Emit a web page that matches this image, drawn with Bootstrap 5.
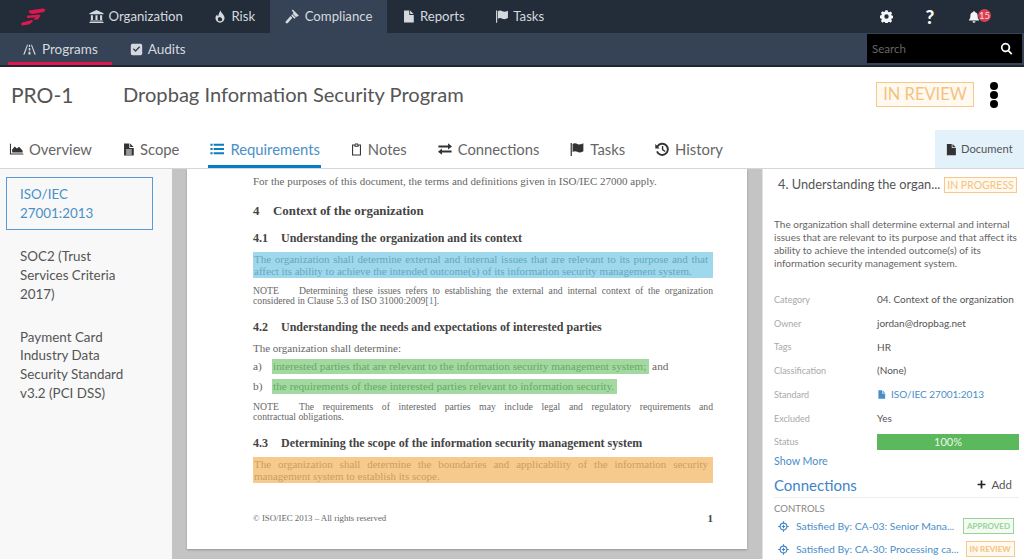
<!DOCTYPE html>
<html lang="en">
<head>
<meta charset="utf-8">
<title>Dropbag Information Security Program</title>
<link href="https://cdn.jsdelivr.net/npm/bootstrap@5.3.0/dist/css/bootstrap.min.css" rel="stylesheet">
<style>
html,body{height:559px;overflow:hidden;}
body{font-family:"Lato","Liberation Sans",sans-serif;background:#fff;color:#555;}
.ic{fill:currentColor;flex:none;display:block;}
.bar-top{height:33px;background:#232c39;}
.bar-sub{height:34px;background:#364356;border-bottom:2px solid #1f2732;}
.logo-box{width:74px;padding-left:21px;}
.top-item{height:33px;padding:0 15px;color:#d5d9de;font-size:13.2px;gap:4.5px;}
.top-item.on{background:#364356;}
.top-tool{width:44px;color:#f4f5f6;font-size:19px;font-weight:900;line-height:20px;}
.bell-wrap{position:relative;}
.bell-num{position:absolute;left:10px;top:-1.5px;width:13px;height:13px;border-radius:50%;background:#d9404f;color:#f6dfe0;font-size:9.5px;line-height:13px;text-align:center;font-weight:400;}
.sub-item{height:32px;padding:0 14px;margin-left:8px;color:#d5d9de;font-size:13.5px;gap:5px;}
.sub-item.on{border-bottom:3px solid #e0174f;padding-top:3px;}
.sub-gap{margin-left:4px;}
.srch{width:155px;height:29px;margin:1px 2px 0 0;background:#000;color:#666;font-size:11.5px;padding:0 9px 0 5px;}
.head-row{height:63px;padding:0 26px 8px 11px;}
.pro-id{width:112px;font-size:21px;color:#555;}
.pro-title{font-size:20.1px;color:#555;}
.st-big{width:98px;height:25px;border:1px solid #f6c98a;background:#fff9f0;color:#f5c27e;font-size:16.5px;line-height:23px;text-align:center;margin-right:16px;}
.dots{width:8px;gap:1px;}
.dots i{display:block;width:8px;height:8px;border-radius:50%;background:#000;}
.tab-row{height:39px;border-bottom:1px solid #d6d6d6;padding-left:9px;}
.tb{height:38px;font-size:14.8px;color:#666;gap:5px;margin-right:30px;}
.tb .ic{color:#333;}
.tb.on{color:#4a90c8;border-bottom:3px solid #0a7cc1;margin-left:-1px;padding:3px 1px 0;margin-right:29px;}
.tb.on .ic{color:#0a7cc1;}
.doc-btn{width:89px;height:38px;background:#e3f1fb;color:#555;font-size:11.2px;gap:4px;padding-left:10px;}
.doc-btn .ic{color:#333;}
.main-row{height:390px;overflow:hidden;}
.side{width:172px;background:#f8f8f8;padding:8px 19px 0 6px;flex:none;font-size:13.4px;line-height:18.7px;color:#555;}
.side-item{padding:0 14px;margin-bottom:24px;}
.side-item.on{border:1px solid #5b9bd5;color:#4a90c8;padding:7px 13px 7px;margin-bottom:17px;}
.viewer{width:590px;flex:none;background:#c4c4c4;padding:0 15px;}
.pg{height:380px;background:#fff;padding:6px 34px 0 66px;font-family:"Liberation Serif",serif;font-size:11px;line-height:12px;color:#666;box-shadow:0 1px 2px rgba(0,0,0,.25);}
.pg p{margin:0;text-align:justify;}
.pg .s-note{font-size:9.7px;line-height:10.4px;}
.note-k{display:inline-block;width:46px;}
.ln-j{display:block;text-align-last:justify;}
.pg h5,.pg h6{margin:0;font-family:"Liberation Serif",serif;font-weight:700;color:#444;line-height:14px;}
.pg h5{font-size:12.9px;}
.pg h6{font-size:12px;}
.hl{margin:0 -5px 0 -1px;padding:0 5px 0 1px;}
.hl-b{background:#9fd8ec;color:#5fa9bd;}
.hl-o{background:#f6ca8c;color:#cd9d5e;}
.li-row{height:15px;line-height:15px;font-size:11.3px;}
.li-k{width:19px;}
.hl-g{background:#a3d9a0;color:#66a966;padding:0 3px 0 1px;}
.pg-foot{font-size:8.8px;}
.pg-num{font-size:11px;font-weight:700;color:#444;}
.rp{flex:1;min-width:0;padding:0 5px 0 11px;border-left:1px solid #e2e2e2;font-size:10px;color:#666;}
.rp-head{height:32px;padding-left:4px;}
.rp-title{width:166px;font-size:12.8px;color:#555;white-space:nowrap;}
.st-mid{width:73px;height:16px;border:1px solid #f6c98a;background:#fff9f0;color:#f5c27e;font-size:10.5px;line-height:14px;text-align:center;}
.rp-desc{margin:17px 0 0;line-height:13px;font-size:10px;color:#666;}
.rp-list{margin-top:18px;}
.rw{height:23.7px;}
.rw-k{width:103px;font-size:9px;color:#a9a9a9;}
.rw-v{flex:1;font-size:10px;color:#555;gap:5px;white-space:nowrap;}
.lnk{color:#4a8ec9;}
.prg{height:16px;background:#5cb85c;color:#eaf6ea;font-size:11px;line-height:16px;text-align:center;flex:1;}
.more{font-size:10.7px;color:#4a8ec9;margin-top:-1px;}
.conn-row{height:25px;border-bottom:1px solid #eee;margin-top:4px;}
.conn{font-size:15px;color:#3d85c6;}
.addb{font-size:11.5px;color:#555;gap:5px;padding-right:7px;}
.addb .ic{color:#222;}
.ctl{font-size:9.6px;color:#888;margin-top:4px;line-height:13px;}
.ci{height:23px;padding-left:4px;font-size:10.4px;color:#4a8ec9;gap:7px;padding-right:5px;white-space:nowrap;}
.cb{height:16px;font-size:8px;font-weight:700;line-height:14px;text-align:center;border:1px solid;margin-left:auto;flex:none;}
.cb-a{width:51px;border-color:#98d498;background:#f3fbf3;color:#98d498;}
.cb-r{width:49px;border-color:#f6c98a;background:#fff9f0;color:#f5c27e;}
.ci .ic{color:#3d85c6;}
</style>
</head>
<body>
<svg width="0" height="0" class="position-absolute">
<defs>
<symbol id="i-bank" viewBox="0 0 16 16"><path d="M8 1 15.5 4.6V5.6H.5V4.6ZM2 6.6h2.2v5H2ZM6.9 6.6h2.2v5H6.9ZM11.8 6.6H14v5h-2.2ZM1.2 12.2h13.6v1.2H1.2ZM.5 13.8h15V15H.5Z"/></symbol>
<symbol id="i-fire" viewBox="0 0 16 16"><path fill-rule="evenodd" d="M8.5.8c.4 3 4.7 4.8 4.7 9A5.2 5.2 0 0 1 8 15a5.2 5.2 0 0 1-5.2-5.2c0-2 1-3.3 2-4.2 0 1 .4 1.8 1 2.1C6.500 5.400 7.300 3 8.500.8ZM8 8.500a2.500 2.500 0 1 0 2.500 2.500C10.500 9.800 9 9.500 8 8.500Z"/></symbol>
<symbol id="i-gavel" viewBox="0 0 16 16"><path d="M7.200 1.600 8.300.5l6.400 6.300-1.100 1.100-.8-.1-.9.900-3.700-3.700.9-.9ZM7.900 5.700l3.500 3.500-1.300 1.300-3.500-3.500ZM5.900 7.400l2 2L3 15a1.300 1.300 0 0 1-1.900 0l-.1-.1a1.300 1.300 0 0 1 0-1.900Z"/></symbol>
<symbol id="i-file" viewBox="0 0 16 16"><path d="M2.500.5H9V6h5.500v9.500h-12ZM10 .7 14.300 5H10Z"/></symbol>
<symbol id="i-filet" viewBox="0 0 16 16"><path fill-rule="evenodd" d="M2.500.5H9V6h5.500v9.500h-12ZM5 8v1.200h7V8Zm0 2.500v1.200h7v-1.200ZM5 13v1.200h7V13ZM10 .7 14.300 5H10Z"/></symbol>
<symbol id="i-flag" viewBox="0 0 16 16"><path d="M1.200 1h1.300v14H1.200ZM3.300 2C5 .8 7 1.200 8.500 2c1.800.9 3.500.7 6.300-.7v8.500c-2.500 1.500-4.800 1.600-6.500.7-1.700-.9-3.400-.9-5 .1Z"/></symbol>
<symbol id="i-road" viewBox="0 0 16 16"><path d="M5 2h1.200L2 14H.3ZM9.800 2H11l4.700 12H14ZM7.300 2h1.400l.1 2.800H7.200ZM7.100 6.200h1.800l.1 3H7ZM6.900 10.800h2.200l.2 3.200H6.700Z"/></symbol>
<symbol id="i-check" viewBox="0 0 16 16"><path fill-rule="evenodd" d="M3 1h10a2 2 0 0 1 2 2v10a2 2 0 0 1-2 2H3a2 2 0 0 1-2-2V3a2 2 0 0 1 2-2Zm9.500 4.300L11.300 4.100 6.800 8.600 4.700 6.500 3.500 7.700l3.300 3.300Z"/></symbol>
<symbol id="i-cog" viewBox="0 0 16 16"><path fill-rule="evenodd" d="M6.600.5h2.800l.4 2 1.400.6 1.700-1.100 2 2-1.100 1.700.6 1.400 2 .4v2.800l-2 .4-.6 1.400 1.100 1.700-2 2-1.700-1.100-1.400.6-.4 2H6.600l-.4-2-1.400-.6-1.700 1.100-2-2 1.100-1.700-.6-1.400-2-.4V7.100l2-.4.6-1.400L1.100 3.600l2-2 1.700 1.100 1.400-.6ZM8 5.500a2.700 2.700 0 1 0 0 5.400 2.700 2.700 0 0 0 0-5.400Z" transform="translate(0 -.2)"/></symbol>
<symbol id="i-bell" viewBox="0 0 16 16"><path d="M8 .5c.6 0 1 .4 1 1v.6c2.400.5 3.800 2.400 3.800 4.700 0 3 .6 4.500 1.900 5.700v.9H1.300v-.9c1.300-1.200 1.900-2.700 1.900-5.700C3.200 4.500 4.600 2.600 7 2.100v-.6c0-.6.400-1 1-1ZM6 14.300h4a2 2 0 0 1-4 0Z"/></symbol>
<symbol id="i-search" viewBox="0 0 16 16"><path fill-rule="evenodd" d="M6.800 1a5.800 5.800 0 0 1 4.600 9.300l3.800 3.800-1.500 1.500-3.800-3.800A5.800 5.800 0 1 1 6.800 1Zm0 2.200a3.600 3.600 0 1 0 0 7.200 3.600 3.600 0 0 0 0-7.200Z"/></symbol>
<symbol id="i-area" viewBox="0 0 16 16"><path d="M.5 2h1.200v11h14v1.200H.5ZM3 12V8.500l3-3.500 2.500 2.500L11 5.500l4 4.500v2Z"/></symbol>
<symbol id="i-list" viewBox="0 0 16 16"><path d="M.5 2h2.500v2.300H.5ZM4.200 2H16v2.300H4.200ZM.5 6.900h2.500v2.300H.5ZM4.200 6.900H16v2.300H4.200ZM.5 11.800h2.500v2.300H.5ZM4.200 11.800H16v2.300H4.200Z"/></symbol>
<symbol id="i-clip" viewBox="0 0 16 16"><path fill-rule="evenodd" d="M6 .5h4v1.300h3.500V15.500h-11V1.800H6ZM6.800 1.800v1.600h2.400V1.800ZM3.800 3.100v11.100h8.400V3.100h-1.600v1.600H5.400V3.100Z"/></symbol>
<symbol id="i-ex" viewBox="0 0 16 16"><path d="M11.500 1.500 16 5l-4.500 3.500V6.200H.5V3.900h11ZM4.500 7.500V9.800h11v2.300h-11v2.400L0 11Z"/></symbol>
<symbol id="i-hist" viewBox="0 0 16 16"><path d="M.3 2.100 2 3.800A7 7 0 1 1 1.200 10.300l1.800-.6A5 5 0 1 0 3.400 5.200L5 6.800H.3ZM7.300 4.200h1.500v3.600l2.500 1.700-.8 1.200-3.200-2.200Z"/></symbol>
<symbol id="i-plus" viewBox="0 0 16 16"><path d="M6.500 1h3v5.500H15v3H9.500V15h-3V9.500H1v-3h5.500Z"/></symbol>
<symbol id="i-cross" viewBox="0 0 16 16"><path fill-rule="evenodd" d="M7.200.3h1.600v1.900a5.900 5.900 0 0 1 5 5h1.900v1.600h-1.900a5.900 5.900 0 0 1-5 5v1.900H7.200v-1.900a5.900 5.900 0 0 1-5-5H.3V7.200h1.900a5.900 5.900 0 0 1 5-5ZM8 3.900a4.100 4.100 0 1 0 0 8.200 4.100 4.100 0 0 0 0-8.200Zm-.8 1.700h1.600v1.600h1.600v1.600H8.800v1.600H7.200V8.800H5.600V7.200h1.600Z"/></symbol>
</defs>
</svg>

<nav class="bar-top d-flex align-items-center">
  <div class="logo-box">
    <svg width="25" height="18" viewBox="0 0 25 18" class="d-block"><path fill="#e0174f" d="M8 2.500 22 .5 24.500 1.500 23 4 11 6 8 4.500ZM6 7.800 18 6.500 19.500 7.500 17 11.500 12 11.500 15 9.500 6 10ZM1 14.500 11 12 12 13.500 8 16.500 1 17.500 0 16Z"/></svg>
  </div>
  <a class="top-item d-flex align-items-center text-decoration-none"><svg class="ic" width="15" height="15"><use href="#i-bank"/></svg>Organization</a>
  <a class="top-item d-flex align-items-center text-decoration-none"><svg class="ic" width="14" height="15"><use href="#i-fire"/></svg>Risk</a>
  <a class="top-item on d-flex align-items-center text-decoration-none"><svg class="ic" width="15" height="15"><use href="#i-gavel"/></svg>Compliance</a>
  <a class="top-item d-flex align-items-center text-decoration-none"><svg class="ic" width="13" height="15"><use href="#i-file"/></svg>Reports</a>
  <a class="top-item d-flex align-items-center text-decoration-none"><svg class="ic" width="14" height="15"><use href="#i-flag"/></svg>Tasks</a>
  <div class="ms-auto d-flex align-items-center" style="padding-right:28px">
    <div class="top-tool d-flex justify-content-center"><svg class="ic" width="13" height="13"><use href="#i-cog"/></svg></div>
    <div class="top-tool d-flex justify-content-center">?</div>
    <div class="top-tool d-flex justify-content-center"><span class="bell-wrap d-block"><svg class="ic" width="12" height="13"><use href="#i-bell"/></svg><span class="bell-num">15</span></span></div>
  </div>
</nav>
<div class="bar-sub d-flex align-items-start">
  <a class="sub-item on d-flex align-items-center text-decoration-none"><svg class="ic" width="15" height="13"><use href="#i-road"/></svg>Programs</a>
  <a class="sub-item sub-gap d-flex align-items-center text-decoration-none"><svg class="ic" width="13" height="13"><use href="#i-check"/></svg>Audits</a>
  <div class="srch ms-auto d-flex align-items-center justify-content-between"><span>Search</span><svg class="ic text-white" width="13" height="13"><use href="#i-search"/></svg></div>
</div>

<header class="head-row d-flex align-items-center">
  <div class="pro-id">PRO-1</div>
  <div class="pro-title">Dropbag Information Security Program</div>
  <div class="st-big ms-auto">IN REVIEW</div>
  <div class="dots d-flex flex-column"><i></i><i></i><i></i></div>
</header>

<div class="tab-row d-flex align-items-start">
  <a class="tb d-flex align-items-center text-decoration-none"><svg class="ic" width="15" height="14"><use href="#i-area"/></svg>Overview</a>
  <a class="tb d-flex align-items-center text-decoration-none"><svg class="ic" width="13" height="15"><use href="#i-filet"/></svg>Scope</a>
  <a class="tb on d-flex align-items-center text-decoration-none"><svg class="ic" width="16" height="14"><use href="#i-list"/></svg>Requirements</a>
  <a class="tb d-flex align-items-center text-decoration-none"><svg class="ic" width="13" height="15"><use href="#i-clip"/></svg>Notes</a>
  <a class="tb d-flex align-items-center text-decoration-none"><svg class="ic" width="16" height="14"><use href="#i-ex"/></svg>Connections</a>
  <a class="tb d-flex align-items-center text-decoration-none"><svg class="ic" width="16" height="15"><use href="#i-flag"/></svg>Tasks</a>
  <a class="tb d-flex align-items-center text-decoration-none"><svg class="ic" width="15" height="15"><use href="#i-hist"/></svg>History</a>
  <a class="doc-btn ms-auto d-flex align-items-center text-decoration-none"><svg class="ic" width="12" height="13"><use href="#i-file"/></svg>Document</a>
</div>

<div class="main-row d-flex">
  <aside class="side">
    <div class="side-item on">ISO/IEC 27001:2013</div>
    <div class="side-item">SOC2 (Trust Services Criteria 2017)</div>
    <div class="side-item">Payment Card Industry Data Security Standard v3.2 (PCI DSS)</div>
  </aside>
  <div class="viewer">
    <div class="pg">
      <p>For the purposes of this document, the terms and definitions given in ISO/IEC 27000 apply.</p>
      <h5 class="d-flex" style="margin-top:17px"><span style="width:20px">4</span>Context of the organization</h5>
      <h6 class="d-flex" style="margin-top:13px"><span style="width:28px">4.1</span>Understanding the organization and its context</h6>
      <p class="hl hl-b" style="margin-top:7px;padding-top:1px;padding-bottom:1px">The organization shall determine external and internal issues that are relevant to its purpose and that affect its ability to achieve the intended outcome(s) of its information security management system.</p>
      <p class="s-note" style="margin-top:8px"><span class="note-k">NOTE</span>Determining these issues refers to establishing the external and internal context of the organization considered in Clause 5.3 of ISO 31000:2009[<span class="lnk">1</span>].</p>
      <h6 class="d-flex" style="margin-top:13px"><span style="width:28px">4.2</span>Understanding the needs and expectations of interested parties</h6>
      <p style="margin-top:8px">The organization shall determine:</p>
      <div class="li-row d-flex" style="margin-top:5px"><span class="li-k">a)</span><span class="hl-g">interested parties that are relevant to the information security management system;</span><span>&nbsp;and</span></div>
      <div class="li-row d-flex" style="margin-top:5px"><span class="li-k">b)</span><span class="hl-g">the requirements of these interested parties relevant to information security.</span></div>
      <p class="s-note" style="margin-top:8px"><span class="ln-j"><span class="note-k">NOTE</span>The requirements of interested parties may include legal and regulatory requirements and</span>contractual obligations.</p>
      <h6 class="d-flex" style="margin-top:13px"><span style="width:28px">4.3</span>Determining the scope of the information security management system</h6>
      <p class="hl hl-o" style="margin-top:7px;padding-top:1px;padding-bottom:1px">The organization shall determine the boundaries and applicability of the information security management system to establish its scope.</p>
      <div class="d-flex justify-content-between align-items-center" style="margin-top:29px"><span class="pg-foot">© ISO/IEC 2013 – All rights reserved</span><span class="pg-num">1</span></div>
    </div>
  </div>
  <aside class="rp">
    <div class="rp-head d-flex align-items-center">
      <div class="rp-title">4. Understanding the organ...</div>
      <div class="st-mid">IN PROGRESS</div>
    </div>
    <p class="rp-desc">The organization shall determine external and internal issues that are relevant to its purpose and that affect its ability to achieve the intended outcome(s) of its information security management system.</p>
    <div class="rp-list">
      <div class="rw d-flex align-items-center"><div class="rw-k">Category</div><div class="rw-v">04. Context of the organization</div></div>
      <div class="rw d-flex align-items-center"><div class="rw-k">Owner</div><div class="rw-v">jordan@dropbag.net</div></div>
      <div class="rw d-flex align-items-center"><div class="rw-k">Tags</div><div class="rw-v">HR</div></div>
      <div class="rw d-flex align-items-center"><div class="rw-k">Classification</div><div class="rw-v">(None)</div></div>
      <div class="rw d-flex align-items-center"><div class="rw-k">Standard</div><div class="rw-v lnk d-flex align-items-center"><svg class="ic" width="9" height="11"><use href="#i-file"/></svg>ISO/IEC 27001:2013</div></div>
      <div class="rw d-flex align-items-center"><div class="rw-k">Excluded</div><div class="rw-v">Yes</div></div>
      <div class="rw d-flex align-items-center"><div class="rw-k">Status</div><div class="prg">100%</div></div>
    </div>
    <div class="more">Show More</div>
    <div class="conn-row d-flex align-items-center justify-content-between">
      <div class="conn">Connections</div>
      <div class="addb d-flex align-items-center"><svg class="ic" width="9" height="9"><use href="#i-plus"/></svg>Add</div>
    </div>
    <div class="ctl">CONTROLS</div>
    <div class="ci d-flex align-items-center"><svg class="ic" width="11" height="11"><use href="#i-cross"/></svg><span>Satisfied By: CA-03: Senior Mana...</span><span class="cb cb-a">APPROVED</span></div>
    <div class="ci d-flex align-items-center"><svg class="ic" width="11" height="11"><use href="#i-cross"/></svg><span>Satisfied By: CA-30: Processing ca...</span><span class="cb cb-r">IN REVIEW</span></div>
  </aside>
</div>
<script src="https://cdn.jsdelivr.net/npm/bootstrap@5.3.0/dist/js/bootstrap.bundle.min.js"></script>
</body>
</html>
